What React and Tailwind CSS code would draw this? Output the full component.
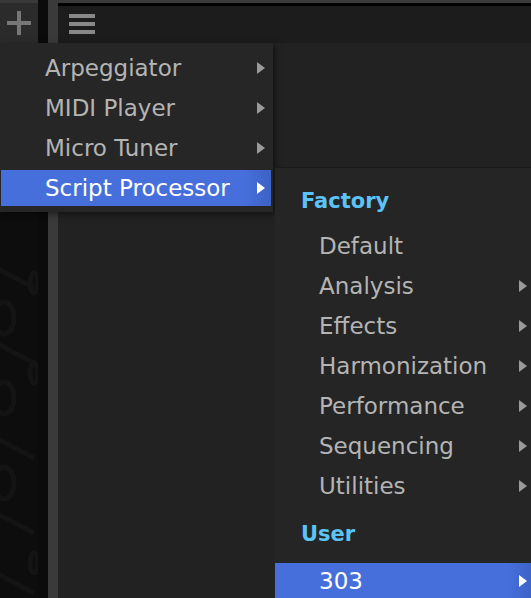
import React from 'react'

const font = { fontFamily: '"DejaVu Sans", "Liberation Sans", sans-serif' }

function Arrow({ white }) {
  return (
    <svg width="8" height="12" viewBox="0 0 8 12" className="shrink-0">
      <path d="M0 0 L8 6 L0 12 Z" fill={white ? '#ffffff' : '#9a9a9a'} />
    </svg>
  )
}

function Row({ label, arrow, active }) {
  return (
    <div className="h-[40px] flex items-center">
      <div
        className={
          'h-[36px] flex-1 flex items-center pr-[6px] ' +
          (active ? 'bg-gradient-to-r from-[#476fdc] from-90% to-[#3d62c6] text-white' : 'text-[#b4b4b4]')
        }
      >
        <span className="flex-1 text-[23px] leading-none pl-[44px]">{label}</span>
        {arrow && <Arrow white={active} />}
      </div>
    </div>
  )
}

export default function App() {
  const factory = [
    ['Default', false],
    ['Analysis', true],
    ['Effects', true],
    ['Harmonization', true],
    ['Performance', true],
    ['Sequencing', true],
    ['Utilities', true],
  ]

  return (
    <div className="w-[531px] h-[598px] relative overflow-hidden flex bg-[#212121]" style={font}>
      {/* left tool column */}
      <div className="w-[38px] flex flex-col">
        <div className="h-[43px] bg-[#2b2b2b] border-t-[3px] border-[#393939] flex items-center justify-center">
          <svg width="24" height="24" viewBox="0 0 24 24">
            <rect x="10" y="0" width="4" height="24" fill="#777777" />
            <rect x="0" y="10" width="24" height="4" fill="#777777" />
          </svg>
        </div>
        <div className="flex-1 bg-[#0d0d0d] overflow-hidden">
          <svg width="38" height="560" viewBox="0 0 38 560">
            <g stroke="#141414" strokeWidth="5" fill="none">
              <path d="M-4 225 L34 245" />
              <path d="M-4 300 L34 320" />
              <path d="M-4 395 L34 415" />
              <path d="M-4 470 L34 490" />
              <ellipse cx="4" cy="275" rx="10" ry="16" />
              <ellipse cx="34" cy="240" rx="4" ry="10" />
              <ellipse cx="34" cy="330" rx="4" ry="10" />
              <ellipse cx="4" cy="355" rx="10" ry="16" />
              <ellipse cx="4" cy="440" rx="10" ry="16" />
              <ellipse cx="34" cy="520" rx="4" ry="10" />
              <path d="M-4 530 L34 550" />
            </g>
          </svg>
        </div>
      </div>
      <div className="w-[10px] bg-[#0b0b0b]" />
      <div className="w-[10px] bg-[#3a3a3a]" />
      {/* main */}
      <div className="flex-1 flex flex-col">
        <div className="h-[43px] border-t-[3px] border-[#3a3a3a]">
          <div className="h-full border-t-[3px] border-black bg-[#1c1c1c] pl-[11px] flex items-center">
            <div className="w-[26px] flex flex-col gap-[4px] mt-[-2px]">
              <div className="h-[4px] bg-[#888888]" />
              <div className="h-[4px] bg-[#888888]" />
              <div className="h-[4px] bg-[#888888]" />
            </div>
          </div>
        </div>
        <div className="flex-1 bg-[#222222]" />
      </div>

      {/* first menu */}
      <div className="absolute left-0 top-[43px] w-[273px] h-[169px] bg-[#262626] pt-[5px] pl-[1px] pr-[2px] shadow-[2px_2px_6px_rgba(0,0,0,0.5)]">
        <Row label="Arpeggiator" arrow />
        <Row label="MIDI Player" arrow />
        <Row label="Micro Tuner" arrow />
        <Row label="Script Processor" arrow active />
      </div>

      {/* submenu */}
      <div className="absolute left-[275px] top-[167px] w-[258px] h-[440px] bg-[#252525] border-t border-[#1a1a1a] pt-[6px]">
        <div className="h-[52px] flex items-center pl-[26px] pt-[3px] text-[21px] font-bold text-[#5bc3f5]">Factory</div>
        {factory.map(([label, arrow]) => (
          <Row key={label} label={label} arrow={arrow} />
        ))}
        <div className="h-[55px] flex items-center pl-[26px] pt-[3px] text-[21px] font-bold text-[#5bc3f5]">User</div>
        <Row label="303" arrow active />
      </div>
    </div>
  )
}
